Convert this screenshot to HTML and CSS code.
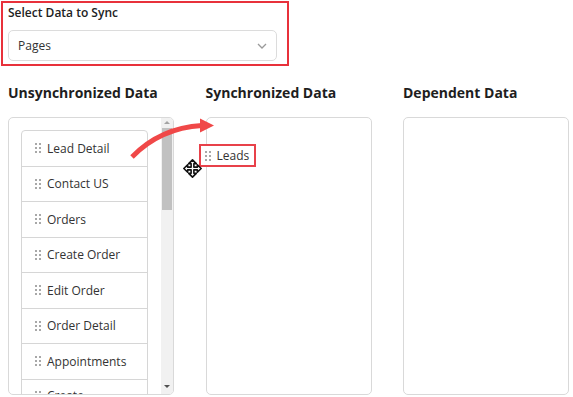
FILE: index.html
```html
<!DOCTYPE html>
<html lang="en">
<head>
  <meta charset="UTF-8" />
  <title>Sync Data</title>
  <link rel="stylesheet" href="styles.css">
</head>
<body>
  <div class="sync-select">
    <label class="sync-label">Select Data to Sync</label>
    <div class="select-box">
      <span>Pages</span>
      <svg class="chevron" width="10" height="6" viewBox="0 0 10 6"><path d="M1 1l4 4 4-4" fill="none" stroke="#9a9a9a" stroke-width="1.3"/></svg>
    </div>
  </div>

  <div class="board">
    <section class="column">
      <h3>Unsynchronized Data</h3>
      <div class="panel">
        <div class="list-area">
          <ul class="item-list">
            <li><span class="grip"></span>Lead Detail</li>
            <li><span class="grip"></span>Contact US</li>
            <li><span class="grip"></span>Orders</li>
            <li><span class="grip"></span>Create Order</li>
            <li><span class="grip"></span>Edit Order</li>
            <li><span class="grip"></span>Order Detail</li>
            <li><span class="grip"></span>Appointments</li>
            <li class="wrap"><span class="grip"></span><span>Create Appointment</span></li>
          </ul>
        </div>
        <div class="scrollbar">
          <span class="sb-up"></span>
          <span class="sb-thumb"></span>
          <span class="sb-rest"></span>
          <span class="sb-down"></span>
        </div>
      </div>
    </section>

    <section class="column">
      <h3>Synchronized Data</h3>
      <div class="panel panel-drop">
        <div class="drag-chip"><span class="grip"></span>Leads</div>
      </div>
    </section>

    <section class="column">
      <h3>Dependent Data</h3>
      <div class="panel"></div>
    </section>

    <!-- drag hint: arrow from list to synced panel -->
    <svg class="drag-arrow" width="86" height="45" viewBox="0 0 86 45">
      <path d="M2 42Q30 13 72 10.5" fill="none" stroke="#f04848" stroke-width="4.8"/>
      <path d="M70 3.5L84 10.5 70 17.5z" fill="#f04848"/>
    </svg>
    <svg class="move-cursor" width="19" height="19" viewBox="0 0 18 18">
      <path d="M9 .8L12.6 4.4H10.3V7.7H13.6V5.4L17.2 9 13.6 12.6V10.3H10.3V13.6H12.6L9 17.2 5.4 13.6H7.7V10.3H4.4V12.6L.8 9 4.4 5.4V7.7H7.7V4.4H5.4Z" fill="#fff" stroke="#111" stroke-width="1.5" stroke-linejoin="round"/>
    </svg>
  </div>
</body>
</html>
```

FILE: styles.css
```css
body {
  font-family: "Open Sans", "Noto Sans", sans-serif;
  margin: 0;
  padding: 0;
  background: #fff;
  color: #333;
}
.sync-select {
  width: 288px;
  box-sizing: border-box;
  margin: 1px 0 0 1px;
  border: 2px solid #e8313b;
  padding: 2px 10px 3px 5px;
}
.sync-label {
  display: block;
  font-size: 12px;
  font-weight: 600;
  line-height: 16px;
  color: #222;
  margin-bottom: 9px;
}
.select-box {
  width: 269px;
  height: 31px;
  box-sizing: border-box;
  border: 1px solid #dcdcdc;
  border-radius: 5px;
  display: flex;
  align-items: center;
  justify-content: space-between;
  padding: 0 9px 0 9px;
  font-size: 12px;
  color: #333;
}
.chevron {
  margin-top: 1px;
}
.board {
  position: relative;
  display: grid;
  grid-template-columns: 166px 166px 166px;
  column-gap: 31.5px;
  padding: 17px 0 0 8px;
}
.column h3 {
  margin: 0 0 14px;
  font-size: 14px;
  line-height: 20px;
  font-weight: 700;
  color: #1e1e1e;
}
.panel {
  height: 278px;
  box-sizing: border-box;
  border: 1px solid #d9d9d9;
  border-radius: 5px;
  display: flex;
  overflow: hidden;
}
.list-area {
  flex: 1;
  padding: 12px 13px 0 12px;
  overflow: hidden;
}
.item-list {
  list-style: none;
  margin: 0;
  padding: 0;
  border: 1px solid #d6d6d6;
  border-radius: 4px 4px 0 0;
}
.item-list li {
  height: 35.5px;
  box-sizing: border-box;
  display: flex;
  align-items: center;
  gap: 5px;
  padding-left: 12px;
  font-size: 12px;
  color: #333;
  white-space: nowrap;
  border-bottom: 1px solid #d6d6d6;
}
.item-list li.wrap {
  height: auto;
  align-items: flex-start;
  white-space: normal;
  line-height: 17px;
  padding: 7px 8px 9px 12px;
}
.item-list li.wrap .grip {
  margin-top: 3px;
}
.grip {
  width: 8px;
  height: 12px;
  flex: none;
  background: radial-gradient(circle, #a8a8a8 1.1px, transparent 1.4px) 0 0 / 4px 4px;
}
.scrollbar {
  width: 12px;
  flex: none;
  background: #f1f1f1;
  display: flex;
  flex-direction: column;
  align-items: center;
}
.sb-up,
.sb-down {
  width: 0;
  height: 0;
  border-left: 3.5px solid transparent;
  border-right: 3.5px solid transparent;
}
.sb-up {
  margin: 3px 0 4px;
  border-bottom: 3.5px solid #a3a3a3;
}
.sb-thumb {
  width: 10px;
  height: 82px;
  background: #c1c1c1;
}
.sb-rest {
  flex: 1;
}
.sb-down {
  margin: 0 0 6px;
  border-top: 3.5px solid #505050;
}
.panel-drop {
  position: relative;
  overflow: visible;
}
.drag-chip {
  position: absolute;
  left: -8px;
  top: 26px;
  height: 23px;
  box-sizing: border-box;
  display: flex;
  align-items: center;
  gap: 5px;
  padding: 0 5px 0 3px;
  background: #fff;
  border: 2px solid #e8414a;
  font-size: 12px;
  color: #333;
}
.drag-arrow {
  position: absolute;
  left: 130px;
  top: 49px;
}
.move-cursor {
  position: absolute;
  left: 183px;
  top: 93px;
}
```
